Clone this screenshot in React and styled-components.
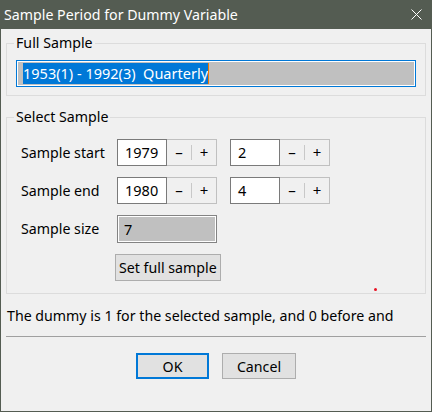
import React from 'react';
import styled, { createGlobalStyle } from 'styled-components';

const GlobalStyle = createGlobalStyle`
  html, body {
    margin: 0;
    padding: 0;
    background: #f0f0f0;
  }
  body {
    font-family: "Noto Sans", "Open Sans", sans-serif;
  }
`;

const FONT = '"Noto Sans", "Open Sans", sans-serif';

const Window = styled.div`
  width: 432px;
  height: 412px;
  box-sizing: border-box;
  display: flex;
  flex-direction: column;
  background: #f0f0f0;
  border: 1px solid #545c52;
  border-top: 0;
  font-family: ${FONT};
  font-size: 14px;
  color: #000;
`;

const TitleBar = styled.div`
  height: 28px;
  flex: none;
  margin: 0 -1px;
  background: #545c52;
  color: #fff;
  display: flex;
  align-items: center;
  justify-content: space-between;
  padding: 0 10px 1px 4px;
  font-size: 14.2px;
`;

const CloseIcon = () => (
  <svg width="11" height="11" viewBox="0 0 11 11">
    <path d="M0.5 0.5 L10.5 10.5 M10.5 0.5 L0.5 10.5" stroke="#fff" strokeWidth="1" />
  </svg>
);

const Body = styled.div`
  flex: 1;
  display: flex;
  flex-direction: column;
  padding: 4px 5px 0 5px;
`;

const Group = styled.fieldset`
  position: relative;
  margin: ${(p) => p.$top || 0}px 0 0 0;
  padding: ${(p) => p.$pad};
  border: 1px solid #dcdcdc;
  min-width: 0;
`;

const Legend = styled.legend`
  margin-left: ${(p) => p.$shift}px;
  padding: 0 2px;
  line-height: 20px;
  font-size: 14.2px;
`;

const FullField = styled.div`
  height: 27px;
  box-sizing: border-box;
  border: 1px solid #0078d7;
  box-shadow: inset 0 0 0 1px #fff;
  background: #c0c0c0;
  display: flex;
  align-items: center;
  padding-left: 6px;
  font-size: 14.5px;
`;

const Selected = styled.span`
  background: #0078d7;
  color: #fff;
  white-space: pre;
  line-height: 21px;
`;

const Caret = styled.span`
  width: 1px;
  height: 21px;
  background: #f07800;
`;

const Grid = styled.div`
  display: grid;
  grid-template-columns: 96px auto;
  row-gap: 11px;
  align-items: center;
  justify-items: start;
`;

const Label = styled.div`
  font-size: 14.2px;
  line-height: 20px;
`;

const SpinPair = styled.div`
  display: flex;
  gap: 13px;
`;

const Spin = styled.div`
  display: flex;
  height: 27px;
`;

const SpinValue = styled.div`
  width: 50px;
  box-sizing: border-box;
  border: 1px solid #7a7a7a;
  background: #fff;
  padding-left: 7px;
  font-size: 14.5px;
  line-height: 25px;
`;

const SpinButtons = styled.div`
  width: 50px;
  box-sizing: border-box;
  border: 1px solid #c0c0c0;
  border-left: 0;
  display: flex;
  align-items: center;
`;

const SpinBtn = styled.div`
  flex: 1;
  text-align: center;
  font-size: 15px;
  line-height: 25px;
`;

const SpinSep = styled.div`
  width: 1px;
  height: 15px;
  background: #c8c8c8;
`;

const SizeBox = styled.div`
  width: 100px;
  height: 28px;
  box-sizing: border-box;
  border: 1px solid #838383;
  box-shadow: inset 0 0 0 1px #fff;
  background: #c0c0c0;
  padding-left: 6px;
  font-size: 14.5px;
  line-height: 26px;
`;

const Button = styled.div`
  box-sizing: border-box;
  height: ${(p) => p.$h || 25}px;
  width: ${(p) => (p.$w ? `${p.$w}px` : 'auto')};
  padding: 0 3px;
  background: #e1e1e1;
  border: ${(p) => (p.$default ? '2px solid #0078d7' : '1px solid #adadad')};
  display: flex;
  align-items: center;
  justify-content: center;
  font-size: 14.2px;
  margin-left: ${(p) => p.$shift || 0}px;
`;

const Dot = styled.div`
  position: absolute;
  right: 48px;
  bottom: 2px;
  width: 3px;
  height: 3px;
  border-radius: 50%;
  background: #e81123;
`;

const Message = styled.div`
  margin-top: 12px;
  padding-left: 1px;
  line-height: 20px;
  font-size: 14.2px;
`;

const Separator = styled.hr`
  margin: 10px 0 0 0;
  border: 0;
  height: 1px;
  background: #a0a0a0;
`;

const Footer = styled.div`
  display: flex;
  justify-content: center;
  gap: 13px;
  margin-top: 16px;
`;

const Spinner = ({ value }) => (
  <Spin>
    <SpinValue>{value}</SpinValue>
    <SpinButtons>
      <SpinBtn>–</SpinBtn>
      <SpinSep />
      <SpinBtn>+</SpinBtn>
    </SpinButtons>
  </Spin>
);

export default function App() {
  return (
    <Window>
      <GlobalStyle />
      <TitleBar>
        <span>Sample Period for Dummy Variable</span>
        <CloseIcon />
      </TitleBar>
      <Body>
        <Group $pad="7px 9px 8px 9px">
          <Legend $shift={-2}>Full Sample</Legend>
          <FullField>
            <Selected>1953(1) - 1992(3)  Quarterly</Selected>
            <Caret />
          </FullField>
        </Group>

        <Group $top={11} $pad="12px 0 12px 14px">
          <Legend $shift={-7}>Select Sample</Legend>
          <Grid>
            <Label>Sample start</Label>
            <SpinPair>
              <Spinner value="1979" />
              <Spinner value="2" />
            </SpinPair>
            <Label>Sample end</Label>
            <SpinPair>
              <Spinner value="1980" />
              <Spinner value="4" />
            </SpinPair>
            <Label>Sample size</Label>
            <SizeBox>7</SizeBox>
            <span />
            <Button $h={27} $shift={-2}>Set full sample</Button>
          </Grid>
          <Dot />
        </Group>

        <Message>The dummy is 1 for the selected sample, and 0 before and</Message>
        <Separator />
        <Footer>
          <Button $w={73} $h={26} $default>OK</Button>
          <Button $w={74} $h={26}>Cancel</Button>
        </Footer>
      </Body>
    </Window>
  );
}
